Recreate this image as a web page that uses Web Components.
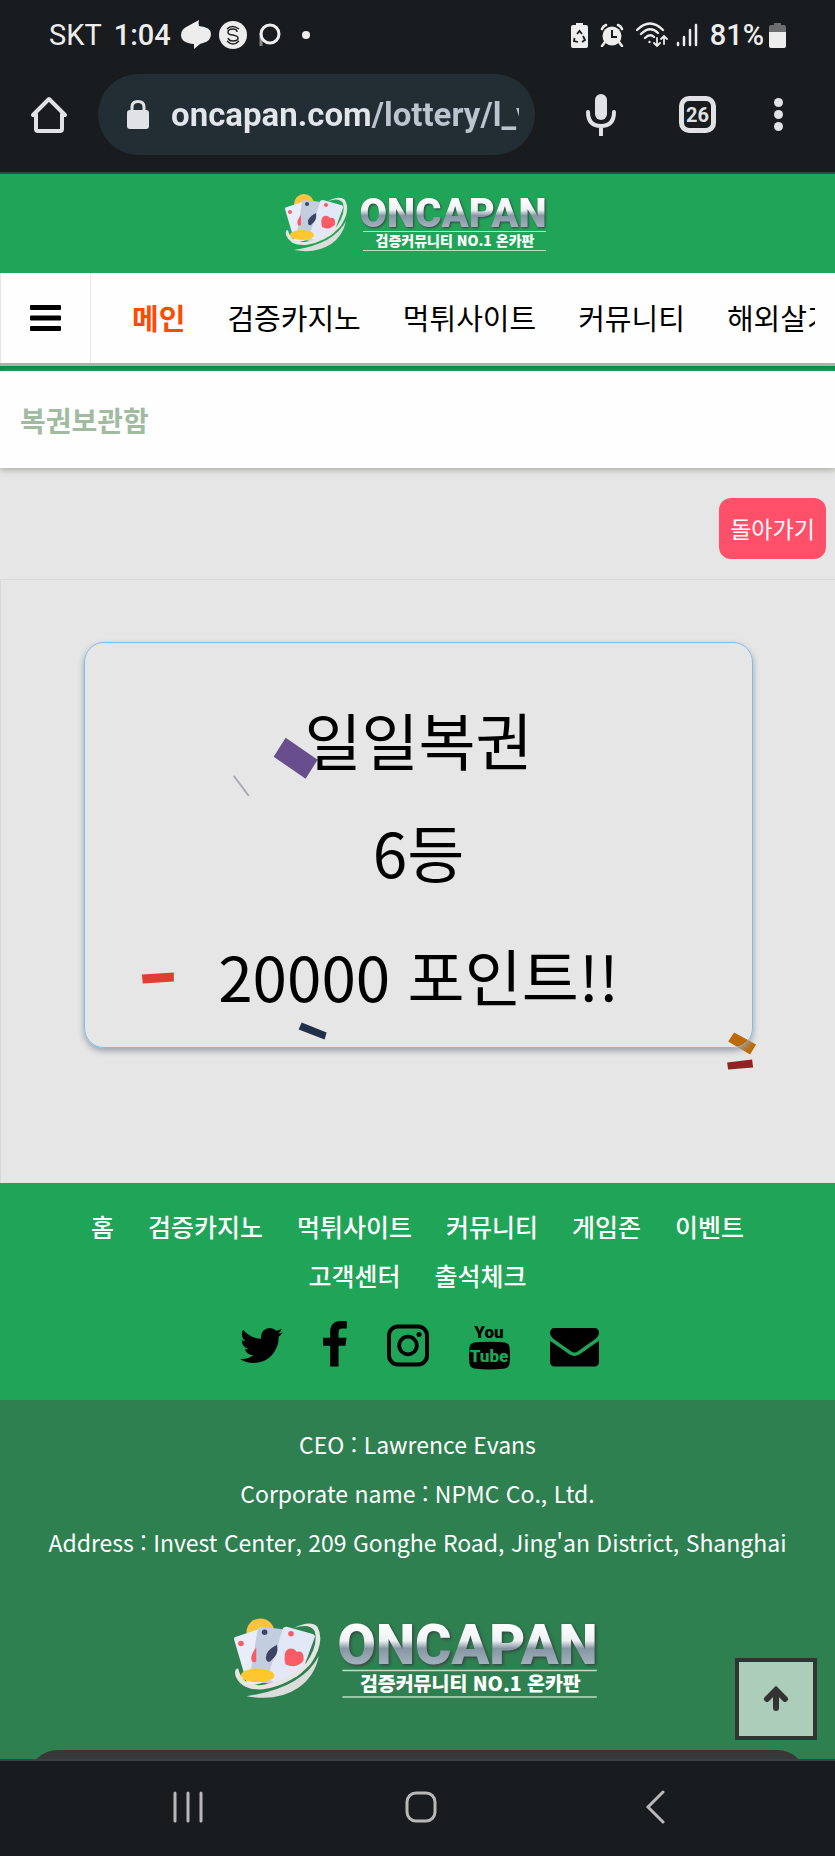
<!DOCTYPE html>
<html lang="ko">
<head>
<meta charset="utf-8">
<meta name="viewport" content="width=device-width, initial-scale=1">
<title>복권보관함</title>
<style>
html,body{margin:0;padding:0}
body{background:#191c1f;color:#000;font-family:"Noto Sans CJK KR",sans-serif;font-size:24px;line-height:48px}
</style>
</head>
<body>
<status-bar></status-bar>
<browser-bar></browser-bar>
<site-header></site-header>
<site-nav></site-nav>
<page-title>복권보관함</page-title>
<lottery-result>
  <span slot="name">일일복권</span>
  <span slot="rank">6등</span>
  <span slot="prize">20000 포인트!!</span>
</lottery-result>
<footer-links></footer-links>
<site-info></site-info>
<system-nav></system-nav>

<script>
const define = (name, html) => {
  const t = document.createElement('template');
  t.innerHTML = html;
  customElements.define(name, class extends HTMLElement {
    constructor() {
      super();
      this.attachShadow({mode: 'open'}).appendChild(t.content.cloneNode(true));
    }
  });
};

define('site-logo', `
<style>
:host{display:block}
svg{display:block;width:100%;height:auto}
.name{font:900 40px Roboto,sans-serif;filter:drop-shadow(1px 1px 1px #33423f)}
.sub{font:900 14px "Noto Sans CJK KR",sans-serif;fill:#fff}
</style>
<svg viewBox="0 0 264 60" role="img" aria-label="ONCAPAN">
  <defs>
    <linearGradient id="chrome" gradientUnits="userSpaceOnUse" x1="0" y1="4" x2="0" y2="35">
      <stop offset="0" stop-color="#fff"/><stop offset=".42" stop-color="#eef1f3"/>
      <stop offset=".6" stop-color="#8796a3"/><stop offset="1" stop-color="#a4b3bf"/>
    </linearGradient>
    <clipPath id="bowl"><path d="M-2-4H64V12Q60 35 40 46Q20 53 2 46Z"/></clipPath>
  </defs>
  <circle cx="19" cy="11" r="10" fill="#fdc23e"/>
  <g clip-path="url(#bowl)">
    <path d="M0 16q0-2 2-2l18-6 6 38-16 4z" fill="#e9edfa"/>
    <path d="M17 9q0-2 2-2l18 2-8 40-18-4z" fill="#c3cde0"/>
    <path d="M35 9q0-2 3-2l18 5q3 1 2 3L48 42 30 48 24 44z" fill="#e3e8f8"/>
  </g>
  <path d="M16 22q-5 6-3 10 2 1 3 0z" fill="#fb5b64"/>
  <path d="M31 20q-8 4-8 9 0 4 3 3l3-3q3-3 2-9z" fill="#3d4363"/>
  <circle cx="22" cy="11" r="2" fill="#3d4363"/>
  <circle cx="5" cy="19" r="2" fill="#fb5b64"/><circle cx="41" cy="12" r="2" fill="#fb5b64"/>
  <path d="M37 34Q35 25 39 23q4-1 6 2 5-1 5 4 1 3-3 5-4 3-10 0z" fill="#fb5b64"/>
  <ellipse cx="17" cy="42" rx="12" ry="5" fill="#ffc72f"/>
  <path d="M43 8Q54 4 58 10 61 20 52 33 39 46 20 49 6 50 3 37q-3 0-2 5 4 11 20 10 20-3 34-18Q66 18 60 7q-5-5-17 1z" fill="#e5e5e2"/>
  <path d="M61 28Q49 51 9 57q22 4 37-6 12-8 15-23z" fill="#dcdcda"/>
  <text class="name" x="168" y="34" text-anchor="middle" fill="url(#chrome)">ONCAPAN</text>
  <path d="M78 38.500H261M78 57.500H261" stroke="#b9e0c5" stroke-width="1"/>
  <text class="sub" x="170" y="53" text-anchor="middle">검증커뮤니티 NO.1 온카판</text>
</svg>`);

define('status-bar', `
<style>
:host{display:flex;justify-content:space-between;align-items:center;height:74px;padding:0 49px 4px;box-sizing:border-box;color:#ededed;font:500 29px/70px Roboto,sans-serif}
div{display:flex;align-items:center}
svg{display:block;flex:none}
.carrier{font-weight:400;margin-right:12px}
.time{margin-right:10px}
</style>
<div>
  <span class="carrier">SKT</span><span class="time">1:04</span>
  <svg width="30" height="30" viewBox="0 0 30 30" fill="#ededed"><path d="M18 0q-1 3 0 6 12 1 12 8 0 7-8 9l-3 1-6 5q0-3 0-5Q0 23 0 15 0 9 7 6z"/></svg>
  <svg style="margin-left:8px" width="28" height="28" viewBox="0 0 28 28" fill="none" stroke="#222" stroke-width="1.500"><circle cx="14" cy="14" r="14" fill="#ededed" stroke="none"/><path d="M18 11q0-3-4-3-5 0-5 3t5 3q5 1 5 3 0 3-5 3-4 0-5-3M8 8q5-5 12 0M8 20q6 6 12 0"/></svg>
  <svg style="margin-left:11px" width="23" height="28" viewBox="0 0 23 28" fill="none"><path d="M3 13v12" stroke="#888" stroke-width="3"/><circle cx="12" cy="13" r="9" stroke="#ededed" stroke-width="3"/></svg>
  <svg style="margin-left:21px" width="8" height="8" viewBox="0 0 8 8"><circle cx="4" cy="4" r="4" fill="#ededed"/></svg>
</div>
<div>
  <svg width="17" height="25" viewBox="0 0 17 25"><path d="M5 0h7v2h3q2 0 2 2v19q0 2-2 2H2q-2 0-2-2V4q0-2 2-2h3z" fill="#ededed"/><path d="M6 11l2.500-3L11 11M12 13l2 4-3 2M3.500 15L3 18l4 1" fill="none" stroke="#191c1f" stroke-width="1.800"/></svg>
  <svg style="margin-left:12px" width="24" height="24" viewBox="0 0 24 24"><g fill="none" stroke="#ededed" stroke-width="2.500" stroke-linecap="round"><path d="M2 6q1-3 4-4M18 2q3 1 4 4M5 19l-3 4M19 19l3 4"/></g><circle cx="12" cy="13" r="9.500" fill="#ededed"/><path d="M12 7v7h5" fill="none" stroke="#191c1f" stroke-width="2"/></svg>
  <svg style="margin-left:12px" width="32" height="26" viewBox="0 0 32 26" fill="none" stroke="#ededed" stroke-width="2.300" stroke-linecap="round"><path d="M1 8Q14-5 27 8M5 12q9-9 17-1M9 16q5-5 9-1"/><circle cx="13.500" cy="20" r="1.200" fill="#ededed" stroke="none"/><g stroke-width="1.800"><path d="M21 16v8M18 21l3 3 3-3M28 22v-8M25 17l3-3 3 3"/></g></svg>
  <svg style="margin-left:8px" width="22" height="24" viewBox="0 0 22 24" fill="none" stroke="#ededed" stroke-width="2.500" stroke-linecap="round"><path d="M2 20v2M8 14v8M14 7v15M20 2v20"/></svg>
  <span style="margin:0 5px 0 12px">81%</span>
  <svg width="17" height="25" viewBox="0 0 17 25"><path d="M5 0h7v2h3q2 0 2 2v6H0V4q0-2 2-2h3z" fill="#6b6d6f"/><path d="M0 9h17v14q0 2-2 2H2q-2 0-2-2z" fill="#ededed"/></svg>
</div>`);

define('browser-bar', `
<style>
:host{display:flex;align-items:center;box-sizing:border-box;padding:0 25px 17px 16px;border-bottom:2px solid #3b4246}
button{background:none;border:0;padding:0;margin:0;height:81px;display:grid;place-items:center;color:#e0e2e5}
svg{display:block}
.home{width:66px}
.mic,.tabs{width:97px}
.more{width:64px}
label{flex:1;min-width:0;display:flex;align-items:center;height:81px;box-sizing:border-box;margin:0 17px 0 16px;padding:0 16px 0 29px;border-radius:41px;background:#232e34}
input{flex:1;min-width:0;margin:0 0 0 22px;padding:0;border:0;outline:0;height:48px;font:700 33px/48px Roboto,sans-serif;color:transparent;background:linear-gradient(90deg,#e2e5ea 200px,#bcc4d0 200px);-webkit-background-clip:text;background-clip:text}
.count{width:27px;height:27px;border:5px solid #e0e2e5;border-radius:10px;font:700 20px/28px Roboto,sans-serif;text-align:center}
</style>
<button class="home" aria-label="Home"><svg width="38" height="38" viewBox="0 0 38 38" fill="none" stroke="currentColor" stroke-width="4" stroke-linejoin="round" stroke-linecap="round"><path d="M3 19L19 3l16 16M6 18v15q0 2 2 2h22q2 0 2-2V18"/></svg></button>
<label><svg width="22" height="29" viewBox="0 0 22 29"><path d="M5 12V7q0-5.500 6-5.500T17 7v5" fill="none" stroke="#e0e2e5" stroke-width="3"/><rect y="10" width="22" height="19" rx="3" fill="#e0e2e5"/></svg><input type="text" aria-label="Address" value="oncapan.com/lottery/l_view"></label>
<button class="mic" aria-label="Voice search"><svg width="30" height="42" viewBox="0 0 30 42"><rect x="9" y="0" width="12" height="26" rx="6" fill="currentColor"/><path d="M2 18q0 14 13 14t13-14M15 32v9" fill="none" stroke="currentColor" stroke-width="4" stroke-linecap="round"/></svg></button>
<button class="tabs" aria-label="Tabs"><span class="count">26</span></button>
<button class="more" aria-label="More"><svg width="9" height="33" viewBox="0 0 9 33" fill="currentColor"><circle cx="4.500" cy="4.500" r="4.500"/><circle cx="4.500" cy="16.500" r="4.500"/><circle cx="4.500" cy="28.500" r="4.500"/></svg></button>`);

define('site-header', `
<style>
:host{display:flex;justify-content:center;background:#20a558;padding:19px 2px 20px 0}
a{display:block;width:264px}
</style>
<a href="#" aria-label="ONCAPAN"><site-logo></site-logo></a>`);

define('site-nav', `
<style>
:host{display:flex;align-items:stretch;height:90px;border-bottom:5px solid #0f8a45;padding-bottom:3px;background:linear-gradient(#fefefe 90px,#9fb9a6 90px)}
button{flex:none;width:91px;box-sizing:border-box;border:solid #e8e8e8;border-width:0 1px;background:none;padding:0;display:grid;place-items:center}
nav{flex:1;min-width:0;overflow:hidden;display:flex;align-items:center;gap:42px;margin-right:20px;padding:0 0 2px 41px}
a{flex:none;white-space:nowrap;font-size:29px;line-height:48px;color:#000;text-decoration:none}
.on{color:#ff4a00;font-weight:700}
</style>
<button aria-label="메뉴"><svg width="31" height="26" viewBox="0 0 31 26"><rect width="31" height="5" rx="1"/><rect y="10.500" width="31" height="5" rx="1"/><rect y="21" width="31" height="5" rx="1"/></svg></button>
<nav><a class="on" href="#">메인</a><a href="#">검증카지노</a><a href="#">먹튀사이트</a><a href="#">커뮤니티</a><a href="#">해외살기</a></nav>`);

define('page-title', `
<style>
:host{display:block;position:relative;background:#fefefe;box-shadow:0 2px 6px #a9aca2}
h1{margin:0;padding:25px 20px 24px;font-size:28px;line-height:48px;font-weight:700;color:#a1bba1}
</style>
<h1><slot></slot></h1>`);

define('lottery-result', `
<style>
:host{display:block;background:#e6e6e6}
.bar{display:flex;justify-content:flex-end;padding:30px 9px 20px;border-bottom:1px solid #dcdcdc}
button{width:107px;height:61px;padding:0 0 2px;border:0;border-radius:12px;background:#ff5069;color:#fff;font:400 23px/48px "Noto Sans CJK KR",sans-serif;white-space:nowrap}
.stage{position:relative;border-left:1px solid #d8d8d8;padding:62px 82px 135px 83px;isolation:isolate}
.confetti{position:absolute;z-index:-1;inset:0;width:100%;height:auto}
.card{display:flex;flex-direction:column;gap:26px;align-items:center;border:1px solid #82bbe4;border-radius:20px;padding:53px 10px 29px;box-shadow:0 3px 6px #9aa0aa;font-size:62px;line-height:86px;text-align:center}
.card p{margin:0}
.card .prize{margin-top:12px}
</style>
<div class="bar"><button>돌아가기</button></div>
<div class="stage">
  <svg class="confetti" viewBox="0 580 835 600" aria-hidden="true">
    <path d="M285 738L317 760 305 779 273 757z" fill="#684e8c"/>
    <path d="M233 776L248 796" stroke="#a8a8b0" stroke-width="2"/>
    <path d="M141 975L173 973V982L142 984z" fill="#e33d33"/>
    <path d="M301 1023L326 1033 324 1040 298 1030z" fill="#20304a"/>
    <path d="M734 1033L756 1045 750 1055 728 1042z" fill="#bd6a05"/>
    <path d="M727 1063L752 1060 753 1068 728 1070z" fill="#8e2323"/>
  </svg>
  <div class="card">
    <p><slot name="name"></slot></p>
    <p><slot name="rank"></slot></p>
    <p class="prize"><slot name="prize"></slot></p>
  </div>
</div>`);

define('footer-links', `
<style>
:host{display:block;background:#20a558;padding:19px 0 30px}
nav{display:flex;flex-wrap:wrap;justify-content:center;gap:1px 34px;padding:0 80px}
a{color:#fff;text-decoration:none;font-size:25px;line-height:48px;font-weight:500;white-space:nowrap}
.social{display:flex;justify-content:center;gap:40px;margin-top:22px;padding-left:4px}
.social a{line-height:0}
svg{display:block;height:49px}
text{font:900 17px Roboto,sans-serif}
</style>
<nav><a href="#">홈</a><a href="#">검증카지노</a><a href="#">먹튀사이트</a><a href="#">커뮤니티</a><a href="#">게임존</a><a href="#">이벤트</a><a href="#">고객센터</a><a href="#">출석체크</a></nav>
<div class="social">
  <a href="#" aria-label="Twitter"><svg width="43" viewBox="108 0 1576 1792"><path d="M1684 408q-67 98-162 167 1 14 1 42 0 130-38 259.500t-115.500 248.500-184.500 210.500-258 146-323 54.500q-271 0-496-145 35 4 78 4 225 0 401-138-105-2-188-64.500t-114-159.500q33 5 61 5 43 0 85-11-112-23-185.500-111.500t-73.500-205.500v-4q68 38 146 41-66-44-105-115t-39-154q0-88 44-163 121 149 294.500 238.500t371.500 99.500q-8-38-8-74 0-134 94.500-228.500t228.500-94.500q140 0 236 102 109-21 205-78-37 115-142 178 93-10 186-50z"/></svg></a>
  <a href="#" aria-label="Facebook"><svg width="24" viewBox="479 0 864 1792"><path d="M1343 12v264h-157q-86 0-116 36t-30 108v189h293l-39 296h-254v759h-306v-759h-255v-296h255v-218q0-186 104-288.500t277-102.500q147 0 228 12z"/></svg></a>
  <a href="#" aria-label="Instagram"><svg width="42" viewBox="0 0 42 49" fill="none" stroke="#000" stroke-width="4"><rect x="2" y="5.500" width="38" height="38" rx="9"/><circle cx="21" cy="24.500" r="8.800" stroke-width="3.800"/><circle cx="32" cy="13.500" r="2.500" fill="#000" stroke="none"/></svg></a>
  <a href="#" aria-label="YouTube"><svg width="41" viewBox="0 0 41 49"><text x="20" y="17" text-anchor="middle">You</text><path d="M5 21.500Q20 20 36 21.500q4 1 4.500 5 1 8 0 16-.5 4-4.500 5-15 2-31 0-4-1-4.500-5-1-8 0-16 .5-4 4.500-5z"/><text x="20" y="41" text-anchor="middle" fill="#20a558">Tube</text></svg></a>
  <a href="#" aria-label="Email"><svg width="49" viewBox="0 0 1792 1792"><path d="M1792 710v794q0 66-47 113t-113 47h-1472q-66 0-113-47t-47-113v-794q44 49 101 87 362 246 497 345 57 42 92.500 65.500t94.500 48 110 24.500h2q51 0 110-24.500t94.500-48 92.500-65.500q170-123 498-345 57-39 100-87zm0-294q0 79-49 151t-122 123q-376 261-468 325-10 7-42.500 31t-54 38.500-52 32.500-57.500 27-50 9h-2q-23 0-50-9t-57.500-27-52-32.500-54-38.500-42.500-31q-91-64-262-182.500t-205-142.500q-62-42-117-115.500t-55-136.500q0-78 41.500-130t118.500-52h1472q65 0 112.500 47t47.500 113z"/></svg></a>
</div>`);

define('site-info', `
<style>
:host{display:block;position:relative;overflow:hidden;background:#2e8050;color:#fff;padding:20px 20px 59px;text-align:center}
p{margin:0 0 1px;font-size:23px;line-height:48px}
site-logo{width:367px;margin:51px auto 0}
.top{position:absolute;right:18px;bottom:19px;width:82px;height:82px;box-sizing:border-box;border:4px solid #333;background:#abcdb9;padding:0;display:grid;place-items:center}
.sheet{position:absolute;left:28px;right:28px;bottom:-51px;height:60px;border-radius:40px;background:#383838}
</style>
<p>CEO : Lawrence Evans</p>
<p>Corporate name : NPMC Co., Ltd.</p>
<p>Address : Invest Center, 209 Gonghe Road, Jing'an District, Shanghai</p>
<site-logo></site-logo>
<div class="sheet"></div>
<button class="top" aria-label="맨 위로"><svg width="26" height="26" viewBox="0 0 26 26" fill="none" stroke="#333" stroke-width="6" stroke-linecap="round"><path d="M13 22V5M4 13l9-9 9 9"/></svg></button>`);

define('system-nav', `
<style>
:host{display:grid;grid-template-columns:repeat(3,1fr);height:96px;padding:0 63px 0 71px;border-top:2px solid #3b4246}
button{background:none;border:0;padding:0 0 4px;display:grid;place-items:center}
svg{fill:none;stroke:#b8b8b8;stroke-width:3;stroke-linecap:round}
</style>
<button aria-label="Recents"><svg width="30" height="32" viewBox="0 0 30 32"><path d="M2 2v28M15 2v28M28 2v28"/></svg></button>
<button aria-label="Home"><svg width="32" height="32" viewBox="0 0 32 32"><rect x="2" y="2" width="28" height="28" rx="9"/></svg></button>
<button aria-label="Back"><svg width="20" height="34" viewBox="0 0 20 34"><path d="M18 2L3 17l15 15"/></svg></button>`);
</script>
</body>
</html>
